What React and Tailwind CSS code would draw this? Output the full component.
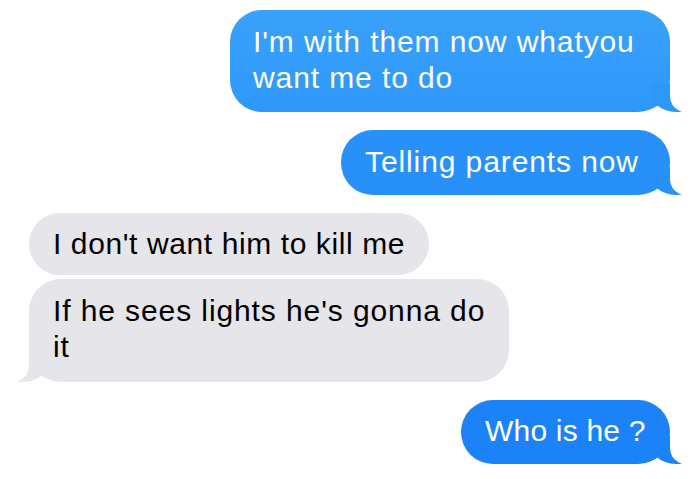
import React from 'react';

const font = { fontFamily: '"Liberation Sans", Arial, sans-serif' };

const Tail = ({ side, color }) => (
    <svg
        width="30"
        height="28"
        viewBox="0 0 30 28"
        className={`absolute bottom-0 ${side === 'right' ? '-right-[12px]' : '-left-[12px] -scale-x-100'}`}
    >
        <path d="M0 0 L18 0 L18 10 C18 19 21 24 30 28 C21 28.5 12 27 6 22 L0 22 Z" fill={color} />
    </svg>
);

const Outgoing = ({ children, bg, tail, className = '' }) => (
    <div className="flex justify-end pr-[30px]">
        <div className={`relative rounded-[32px] text-white ${bg} ${className}`}>
            {children}
            <Tail side="right" color={tail} />
        </div>
    </div>
);

export default function App() {
    return (
        <div className="w-[700px] h-[479px] bg-white overflow-hidden pt-[10px] flex flex-col text-[30px] leading-[36px] tracking-[0.9px]" style={font}>
            <Outgoing bg="bg-gradient-to-b from-[#3aa1fb] to-[#2e98fa]" tail="#2e98fa" className="w-[440px]">
                <p className="relative z-10 pl-[23px] pr-4 pt-[14px] pb-[16px]">
                    I'm with them now whatyou<br />want me to do
                </p>
            </Outgoing>

            <div className="mt-[18px]">
                <Outgoing bg="bg-[#2891f9]" tail="#2891f9" className="w-[329px]">
                    <p className="relative z-10 pl-[24px] pt-[14px] pb-[15px]">Telling parents now</p>
                </Outgoing>
            </div>

            <div className="mt-[18px] pl-[29px] flex flex-col gap-[4px] items-start text-black">
                <div className="w-[400px] rounded-[32px] bg-[#e5e5ea] pl-[24px] pt-[13px] pb-[13px] tracking-[0.6px]">
                    I don't want him to kill me
                </div>
                <div className="relative w-[480px] rounded-[32px] bg-[#e5e5ea]">
                    <p className="relative z-10 pl-[24px] pt-[14px] pb-[17px]">
                        If he sees lights he's gonna do<br />it
                    </p>
                    <Tail side="left" color="#e5e5ea" />
                </div>
            </div>

            <div className="mt-[18px]">
                <Outgoing bg="bg-[#1b83f7]" tail="#1b83f7" className="w-[209px]">
                    <p className="relative z-10 pl-[24px] pt-[13px] pb-[15px] tracking-[0.2px]">Who is he ?</p>
                </Outgoing>
            </div>
        </div>
    );
}
